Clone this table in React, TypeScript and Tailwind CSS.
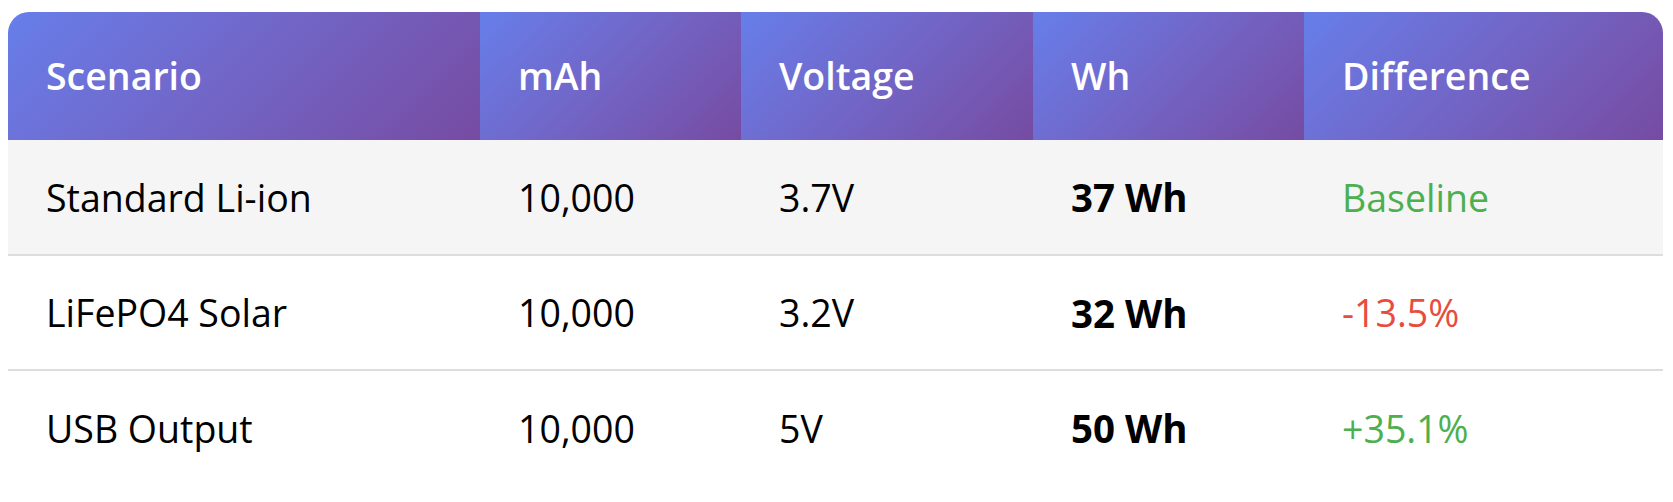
const rows = [
  { scenario: "Standard Li-ion", mah: "10,000", voltage: "3.7V", wh: "37 Wh", diff: "Baseline", tone: "text-[#4caf50]", shade: true },
  { scenario: "LiFePO4 Solar", mah: "10,000", voltage: "3.2V", wh: "32 Wh", diff: "-13.5%", tone: "text-[#e74c3c]", shade: false },
  { scenario: "USB Output", mah: "10,000", voltage: "5V", wh: "50 Wh", diff: "+35.1%", tone: "text-[#4caf50]", shade: false },
];

const headers = ["Scenario", "mAh", "Voltage", "Wh", "Difference"];
const widths = ["w-[472px]", "w-[261px]", "w-[292px]", "w-[271px]", "w-[359px]"];

export default function App() {
  return (
    <div className="min-h-screen bg-white pt-[12px] pl-[8px] font-['Open_Sans','Noto_Sans',sans-serif]">
      <div className="w-[1655px] overflow-hidden rounded-[21px]">
        <table className="w-full table-fixed border-collapse text-left">
          <thead>
            <tr>
              {headers.map((h, i) => (
                <th
                  key={h}
                  className={`${widths[i]} h-[128px] bg-linear-135 from-[#667eea] to-[#764ba2] pl-[38px] text-[37.5px] font-semibold text-white`}
                >
                  {h}
                </th>
              ))}
            </tr>
          </thead>
          <tbody>
            {rows.map((r, idx) => (
              <tr
                key={r.scenario}
                className={`${r.shade ? "bg-[#f5f5f5]" : "bg-white"} ${idx < rows.length - 1 ? "border-b-2 border-[#dddddd]" : ""}`}
              >
                <td className="h-[115px] pt-[2px] pl-[38px] text-[37.5px] text-black">{r.scenario}</td>
                <td className="pt-[2px] pl-[38px] text-[37.5px] text-black">{r.mah}</td>
                <td className="pt-[2px] pl-[38px] text-[37.5px] text-black">{r.voltage}</td>
                <td className="pt-[2px] pl-[38px] text-[38.5px] font-bold text-black">{r.wh}</td>
                <td className={`pt-[2px] pl-[38px] text-[37.5px] ${r.tone}`}>{r.diff}</td>
              </tr>
            ))}
          </tbody>
        </table>
      </div>
    </div>
  );
}
